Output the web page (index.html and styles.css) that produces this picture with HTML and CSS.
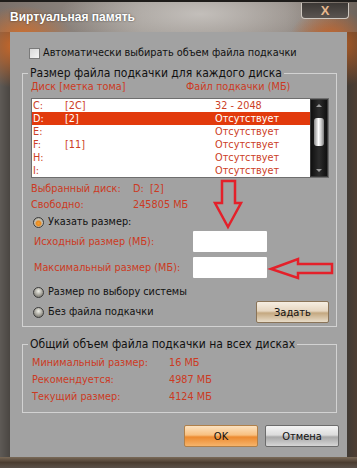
FILE: index.html
```html
<!DOCTYPE html>
<html lang="ru">
<head>
    <meta charset="UTF-8">
    <meta name="viewport" content="width=device-width, initial-scale=1.0">
    <title>Виртуальная память</title>
    <link rel="stylesheet" href="styles.css">
</head>
<body>
    <div class="window">
        <div class="titlebar">
            <span class="title">Виртуальная память</span>
            <span class="close">X</span>
        </div>

        <div class="client">
            <label class="check"><span class="box"></span>Автоматически выбирать объем файла подкачки</label>

            <fieldset class="group disks">
                <legend>Размер файла подкачки для каждого диска</legend>
                <div class="list-head"><span>Диск [метка тома]</span><span>Файл подкачки (МБ)</span></div>

                <div class="listbox">
                    <div class="rows">
                        <div class="row"><span>C:</span><span>[2C]</span><span>32 - 2048</span></div>
                        <div class="row selected"><span>D:</span><span>[2]</span><span>Отсутствует</span></div>
                        <div class="row"><span>E:</span><span></span><span>Отсутствует</span></div>
                        <div class="row"><span>F:</span><span>[11]</span><span>Отсутствует</span></div>
                        <div class="row"><span>H:</span><span></span><span>Отсутствует</span></div>
                        <div class="row"><span>I:</span><span></span><span>Отсутствует</span></div>
                    </div>
                    <div class="scrollbar">
                        <span class="arrow up"></span>
                        <span class="thumb"></span>
                        <span class="arrow down"></span>
                    </div>
                </div>

                <div class="info">
                    <span>Выбранный диск:</span><span>D:&nbsp;&nbsp;[2]</span>
                    <span>Свободно:</span><span>245805 МБ</span>
                </div>

                <div class="radio-row first"><span class="radio on"></span>Указать размер:</div>
                <div class="size-row"><span>Исходный размер (МБ):</span><span class="field"></span></div>
                <div class="size-row"><span>Максимальный размер (МБ):</span><span class="field"></span></div>
                <div class="radio-row second"><span class="radio"></span>Размер по выбору системы</div>
                <div class="last-row">
                    <div class="radio-row"><span class="radio"></span>Без файла подкачки</div>
                    <button class="btn set">Задать</button>
                </div>
            </fieldset>

            <fieldset class="group total">
                <legend>Общий объем файла подкачки на всех дисках</legend>
                <div class="totals">
                    <span>Минимальный размер:</span><span>16 МБ</span>
                    <span>Рекомендуется:</span><span>4987 МБ</span>
                    <span>Текущий размер:</span><span>4124 МБ</span>
                </div>
            </fieldset>

            <div class="actions">
                <button class="btn ok">OK</button>
                <button class="btn cancel">Отмена</button>
            </div>
        </div>

        <div class="bottom"></div>

        <!-- red arrows drawn over the dialog -->
        <svg class="arrows" width="357" height="468" viewBox="0 0 357 468">
            <path d="M222 181 L222 203 L215 203 L228 227 L241 203 L235 203 L235 181 Z" />
            <path d="M271 269 L298 259 L298 264 L332 264 L332 273 L298 273 L298 278 Z" />
        </svg>
    </div>
</body>
</html>
```

FILE: styles.css
```css
body {
    margin: 0;
    font-family: "DejaVu Sans Condensed", "Liberation Sans", Arial, sans-serif;
    font-size: 10.8px;
    background: #3a3530;
}
.window {
    position: relative;
    width: 357px;
    height: 468px;
    display: flex;
    flex-direction: column;
    overflow: hidden;
    background:
        radial-gradient(circle at 14px 46px, #c8682a 0, rgba(200, 104, 42, 0.6) 18px, transparent 42px),
        radial-gradient(circle at 336px 44px, #c06022 0, rgba(192, 96, 34, 0.5) 20px, transparent 44px),
        linear-gradient(to right, #5e5a56 0, #4a4642 10px, #403a34 347px, #4e3e32 357px);
}
.titlebar {
    height: 32px;
    flex: none;
    display: flex;
    justify-content: space-between;
    align-items: flex-start;
    border-top: 2px solid #1e1c1a;
    box-sizing: border-box;
    background:
        radial-gradient(ellipse 50px 30px at 22px 34px, rgba(214, 110, 40, 0.9), transparent),
        radial-gradient(ellipse 40px 30px at 330px 36px, rgba(206, 100, 36, 0.9), transparent),
        radial-gradient(ellipse 140px 40px at 200px 12px, rgba(200, 196, 192, 0.9), transparent),
        linear-gradient(to right, #7a706a, #9a948e 40%, #8e8680 80%, #6e645c);
}
.title {
    padding: 8px 0 0 10px;
    line-height: 14px;
    font-family: "Liberation Sans", Arial, sans-serif;
    font-size: 12px;
    font-weight: bold;
    color: #ffffff;
    text-shadow: 0 0 2px rgba(0, 0, 0, 0.6);
}
.close {
    width: 46px;
    height: 15px;
    margin: 1px 8px 0 0;
    border: 1px solid #cfc8c0;
    border-top: none;
    border-radius: 0 0 4px 4px;
    background: linear-gradient(#3c3835, #5a5450);
    color: #e7b88e;
    font-family: "Liberation Sans", Arial, sans-serif;
    font-weight: bold;
    font-size: 13px;
    line-height: 15px;
    text-align: center;
}
.client {
    flex: 1;
    margin: 0 10px;
    padding: 14px 8px 10px 12px;
    background: #a2a2a2;
    display: flex;
    flex-direction: column;
}
.check {
    display: flex;
    align-items: center;
    gap: 3px;
    margin-left: 7px;
    line-height: 14px;
    color: #111;
}
.box {
    width: 9px;
    height: 9px;
    border: 1px solid #7a7a7a;
    background: linear-gradient(135deg, #d8d8d8, #f4f4f4);
}
.group {
    margin: 5px 2px 0 0;
    padding: 0 7px 3px 8px;
    border: 1px solid #d2d2d2;
    min-width: 0;
}
.group legend {
    margin-left: -3px;
    padding: 0 2px;
    font-size: 12px;
    line-height: 16px;
    white-space: nowrap;
    color: #111;
}
.list-head {
    display: grid;
    grid-template-columns: 155px 1fr;
    line-height: 12px;
    color: #cc3a22;
}
.listbox {
    margin-top: 5px;
    display: flex;
    height: 80px;
    box-sizing: border-box;
    border: 1px solid #6e6e6e;
    background: #ffffff;
}
.rows {
    flex: 1;
}
.row {
    display: grid;
    grid-template-columns: 32px 150px 1fr;
    height: 13px;
    line-height: 13px;
    padding-left: 1px;
    color: #cc4026;
}
.row.selected {
    background: #e23a0c;
    color: #ffffff;
}
.scrollbar {
    width: 18px;
    display: flex;
    flex-direction: column;
    align-items: center;
    background: linear-gradient(to right, #101010, #2c2c2c 50%, #101010);
    border: 1px solid #3a3a3a;
    box-sizing: border-box;
}
.arrow {
    width: 0;
    height: 0;
    margin: 4px 0;
    border-left: 3px solid transparent;
    border-right: 3px solid transparent;
}
.arrow.up {
    border-bottom: 3px solid #9a9a9a;
}
.arrow.down {
    margin-top: auto;
    border-top: 3px solid #9a9a9a;
}
.thumb {
    width: 10px;
    height: 28px;
    margin-top: 7px;
    border-radius: 3px;
    background: linear-gradient(to right, #8a8a8a, #ffffff 45%, #d0d0d0 70%, #7a7a7a);
}
.info {
    margin-top: 3px;
    display: grid;
    grid-template-columns: 102px 1fr;
    line-height: 16px;
    color: #cc3a22;
}
.radio-row {
    display: flex;
    align-items: center;
    gap: 4px;
    padding-left: 2px;
    line-height: 14px;
    color: #111;
}
.radio-row.first {
    margin-top: 2px;
}
.radio-row.second {
    margin-top: 7px;
}
.radio {
    width: 9px;
    height: 9px;
    border-radius: 50%;
    border: 1px solid #3c3c3c;
    background: radial-gradient(circle at 50% 35%, #f0f0e8, #9a9890 60%, #6a6860);
}
.radio.on {
    background: radial-gradient(circle at 50% 60%, #f6a030 0, #e88a20 30%, #c8c4b8 55%, #7a7870);
}
.size-row {
    display: grid;
    grid-template-columns: 159px 74px;
    align-items: center;
    padding-left: 3px;
    margin-top: 2px;
    color: #cc3a22;
}
.size-row + .size-row {
    margin-top: 5px;
}
.field {
    height: 21px;
    background: #ffffff;
    border-radius: 1px;
}
.last-row {
    display: flex;
    justify-content: space-between;
    align-items: center;
    margin-top: 2px;
}
.btn {
    width: 74px;
    height: 22px;
    padding: 0;
    font-family: "DejaVu Sans Condensed", "Liberation Sans", Arial, sans-serif;
    font-size: 11px;
    color: #111;
    border: 1px solid #7c7468;
    border-radius: 2px;
}
.btn.set {
    width: 73px;
    background: linear-gradient(#f6eee2, #e6d6c0 45%, #c4a880 55%, #e8dcc8);
    border-color: #8a7458;
}
.total {
    margin-top: 9px;
    padding-bottom: 7px;
}
.totals {
    margin-top: 2px;
    display: grid;
    grid-template-columns: 137px 1fr;
    padding-left: 1px;
    line-height: 17px;
    color: #cc3a22;
}
.actions {
    display: flex;
    justify-content: flex-end;
    gap: 7px;
    margin-top: 12px;
}
.btn.ok {
    background: linear-gradient(#fce2c0, #f8c080 45%, #ec8a30 55%, #f6b46a);
    border-color: #b0804a;
}
.btn.cancel {
    background: linear-gradient(#f4f4f4, #dcdcdc 45%, #a8a8a8 55%, #d6d6d6);
    border-color: #6c6c6c;
}
.bottom {
    height: 11px;
    flex: none;
    background: linear-gradient(#7a6a58, #4a3c30 50%, #5a5048);
}
.arrows {
    position: absolute;
    top: 0;
    left: 0;
    pointer-events: none;
}
.arrows path {
    fill: none;
    stroke: #e4202a;
    stroke-width: 2.5;
    stroke-linejoin: miter;
}
```
